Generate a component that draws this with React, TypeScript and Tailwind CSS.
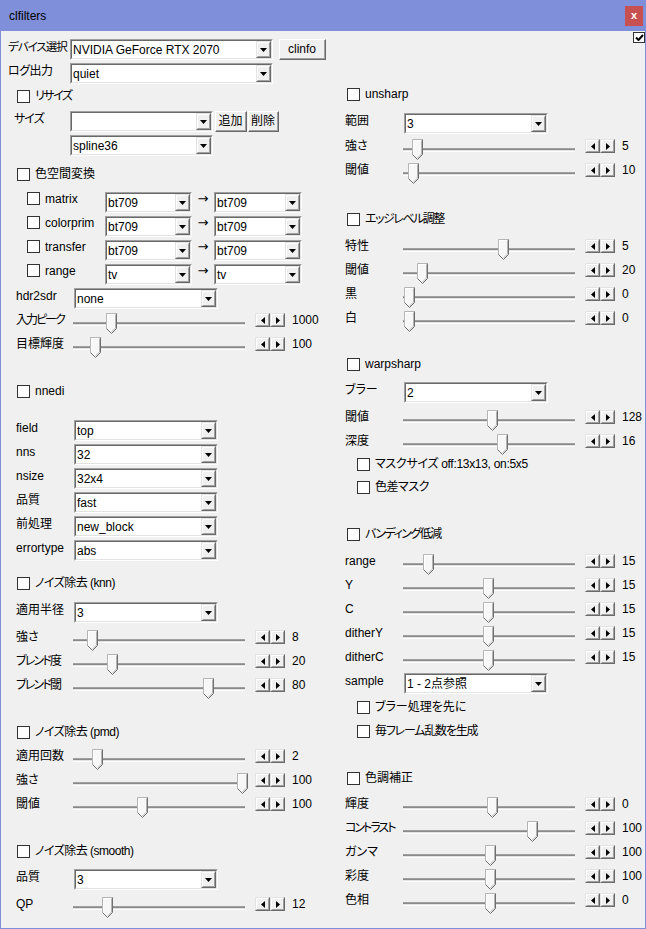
import React from 'react';

type SliderProps = { label: string; pos: number; value: string; cls: string; lw: string; t?: string };

const Check = ({ checked }: { checked?: boolean }) => (
  <div className="flex h-[13px] w-[13px] shrink-0 items-center justify-center border border-[#333333] bg-white">
    {checked && (
      <svg width="9" height="8" viewBox="0 0 9 8">
        <path d="M1 4l2.5 2.5L8 1" stroke="#000" strokeWidth="2" fill="none" />
      </svg>
    )}
  </div>
);

const CheckRow = ({ label, cls, t = '' }: { label: string; cls: string; t?: string }) => (
  <div className={`flex h-[14px] items-center ${cls}`}>
    <Check />
    <span className={`ml-[5px] whitespace-nowrap leading-[14px] ${t}`}>{label}</span>
  </div>
);

const DropBtn = () => (
  <div className="flex w-[15px] shrink-0 border border-t-[#e3e3e3] border-l-[#e3e3e3] border-r-[#696969] border-b-[#696969] bg-[#f0f0f0]">
    <div className="flex flex-1 items-center justify-center border border-t-white border-l-white border-r-[#a0a0a0] border-b-[#a0a0a0]">
      <svg width="7" height="4" viewBox="0 0 7 4">
        <path d="M0 0h7L3.5 4z" fill="#000" />
      </svg>
    </div>
  </div>
);

const Combo = ({ value, cls }: { value: string; cls: string }) => (
  <div className={`flex h-[21px] shrink-0 border border-t-[#a0a0a0] border-l-[#a0a0a0] border-r-white border-b-white ${cls}`}>
    <div className="flex min-w-0 flex-1 border border-t-[#696969] border-l-[#696969] border-r-[#e3e3e3] border-b-[#e3e3e3] bg-white">
      <span className="flex-1 truncate pl-[1px] pt-[2px] leading-[15px]">{value}</span>
      <DropBtn />
    </div>
  </div>
);

const Btn = ({ label, cls }: { label: string; cls: string }) => (
  <div className={`flex h-[21px] shrink-0 border border-t-white border-l-white border-r-[#696969] border-b-[#696969] bg-[#f0f0f0] ${cls}`}>
    <div className="flex flex-1 items-center justify-center border-r border-b border-[#a0a0a0] leading-[15px]">{label}</div>
  </div>
);

const SpinBtn = ({ left }: { left?: boolean }) => (
  <div className="flex h-[14px] w-[15px] border border-t-[#e3e3e3] border-l-[#e3e3e3] border-r-[#696969] border-b-[#696969] bg-[#f0f0f0]">
    <div className="flex flex-1 items-center justify-center border border-t-white border-l-white border-r-[#a0a0a0] border-b-[#a0a0a0]">
      <svg width="4" height="7" viewBox="0 0 4 7">
        <path d={left ? 'M4 0v7L0 3.5z' : 'M0 0v7l4-3.5z'} fill="#000" />
      </svg>
    </div>
  </div>
);

const Thumb = ({ pos }: { pos: number }) => (
  <svg width="11" height="21" viewBox="0 0 11 21" className="absolute top-[1px]" style={{ left: pos - 5 }}>
    <path d="M0.5 0.5H10.5V15.5L5.5 20.5L0.5 15.5Z" fill="#f7f7f7" />
    <path d="M0.5 15.5V0.5H10.5" stroke="#b4b4b4" fill="none" />
    <path d="M1.5 15V1.5H9.5" stroke="#fff" fill="none" />
    <path d="M10.5 0.5V15.5L5.5 20.5L0.5 15.5" stroke="#6f6f6f" fill="none" />
    <path d="M9.5 1.5V15L5.5 19" stroke="#b4b4b4" fill="none" />
  </svg>
);

const Slider = ({ label, pos, value, cls, lw, t = '' }: SliderProps) => (
  <div className={`flex h-[24px] shrink-0 items-start ${cls}`}>
    <span className={`shrink-0 whitespace-nowrap leading-[16px] ${lw} ${t}`}>{label}</span>
    <div className="relative h-[24px] w-[172px] shrink-0 pt-[10px]">
      <div className="h-[4px] border-t border-b border-t-[#a0a0a0] border-b-white bg-[#e3e3e3]">
        <div className="h-[1px] bg-[#8a8a8a]" />
      </div>
      <Thumb pos={pos} />
    </div>
    <div className="ml-[10px] mt-[1px] flex shrink-0">
      <SpinBtn left />
      <SpinBtn />
    </div>
    <span className="ml-[7px] leading-[16px]">{value}</span>
  </div>
);

const ComboRow = ({ label, value, cls, lw }: { label: string; value: string; cls: string; lw: string }) => (
  <div className={`flex h-[21px] shrink-0 items-start ${cls}`}>
    <span className={`shrink-0 whitespace-nowrap leading-[16px] ${lw}`}>{label}</span>
    <Combo value={value} cls="w-[144px]" />
  </div>
);

const CsRow = ({ label, a, b, cls }: { label: string; a: string; b: string; cls: string }) => (
  <div className={`flex h-[21px] shrink-0 items-start pl-[27px] ${cls}`}>
    <div className="flex w-[78px] shrink-0 items-start">
      <Check />
      <span className="ml-[5px] leading-[14px]">{label}</span>
    </div>
    <Combo value={a} cls="w-[87px]" />
    <span className="w-[22px] text-center font-['DejaVu_Sans',sans-serif] text-[13px] leading-[13px]">→</span>
    <Combo value={b} cls="w-[88px]" />
  </div>
);

const L = 'pl-[16px]';
const LW = 'w-[57px]';
const R = 'pl-[15px]';
const RW = 'w-[58px]';

export default function App() {
  return (
    <div className="relative h-[929px] w-[646px] overflow-hidden bg-[#f0f0f0] text-[12px] text-black font-['Liberation_Sans','Noto_Sans_CJK_JP',sans-serif] [font-feature-settings:'palt'] shadow-[inset_1px_0_0_#7f8fd9,inset_-1px_0_0_#7f8fd9,inset_0_-1px_0_#7f8fd9]">
      {/* title bar */}
      <div className="flex h-[31px] items-center bg-[#7f8fd9] pl-[9px]">
        <span className="leading-[16px]">clfilters</span>
        <div className="ml-auto mr-[3px] flex h-[20px] w-[18px] items-center justify-center bg-[#c75050] text-[11px] font-bold leading-none text-white">
          x
        </div>
      </div>

      <div className="absolute left-[633px] top-[32px] flex h-[11px] w-[12px] items-center justify-center border border-[#333333] bg-white">
        <svg width="9" height="7" viewBox="0 0 9 7">
          <path d="M1 3.5l2.5 2.5L8 1" stroke="#000" strokeWidth="2" fill="none" />
        </svg>
      </div>

      <div className="flex">
        {/* left column */}
        <div className="flex w-[330px] shrink-0 flex-col">
          <div className="mt-[8px] flex h-[21px] items-start pl-[8px]">
            <span className="w-[62px] shrink-0 whitespace-nowrap text-[11.5px] leading-[16px] tracking-[-1px]">デバイス選択</span>
            <Combo value="NVIDIA GeForce RTX 2070" cls="w-[203px]" />
            <Btn label="clinfo" cls="ml-[6px] w-[47px]" />
          </div>
          <div className="mt-[3px] flex h-[21px] items-start pl-[8px]">
            <span className="w-[62px] shrink-0 leading-[16px] tracking-[-0.5px]">ログ出力</span>
            <Combo value="quiet" cls="w-[203px]" />
          </div>
          <CheckRow label="リサイズ" cls="mt-[5px] pl-[17px]" t="tracking-[-1.5px]" />
          <div className="mt-[8px] flex h-[21px] items-start pl-[14px]">
            <span className="w-[56px] shrink-0 leading-[16px] tracking-[-1px]">サイズ</span>
            <Combo value="" cls="w-[143px]" />
            <Btn label="追加" cls="ml-[2px] w-[32px]" />
            <Btn label="削除" cls="ml-[1px] w-[31px]" />
          </div>
          <div className="mt-[3px] flex h-[21px] pl-[70px]">
            <Combo value="spline36" cls="w-[143px]" />
          </div>

          <CheckRow label="色空間変換" cls="mt-[11px] pl-[17px]" />
          <CsRow label="matrix" a="bt709" b="bt709" cls="mt-[11px]" />
          <CsRow label="colorprim" a="bt709" b="bt709" cls="mt-[3px]" />
          <CsRow label="transfer" a="bt709" b="bt709" cls="mt-[3px]" />
          <CsRow label="range" a="tv" b="tv" cls="mt-[3px]" />
          <ComboRow label="hdr2sdr" value="none" cls={`mt-[3px] ${L}`} lw="w-[58px]" />
          <Slider label="入力ピーク" pos={38} value="1000" cls={`mt-[3px] ${L}`} lw={LW} t="tracking-[-2px]" />
          <Slider label="目標輝度" pos={22} value="100" cls={L} lw={LW} />

          <CheckRow label="nnedi" cls="mt-[24px] pl-[17px]" />
          <ComboRow label="field" value="top" cls={`mt-[22px] ${L}`} lw="w-[58px]" />
          <ComboRow label="nns" value="32" cls={`mt-[3px] ${L}`} lw="w-[58px]" />
          <ComboRow label="nsize" value="32x4" cls={`mt-[3px] ${L}`} lw="w-[58px]" />
          <ComboRow label="品質" value="fast" cls={`mt-[3px] ${L}`} lw="w-[58px]" />
          <ComboRow label="前処理" value="new_block" cls={`mt-[3px] ${L}`} lw="w-[58px]" />
          <ComboRow label="errortype" value="abs" cls={`mt-[3px] ${L}`} lw="w-[58px]" />

          <CheckRow label="ノイズ除去 (knn)" cls="mt-[15px] pl-[17px]" t="tracking-[-0.5px]" />
          <ComboRow label="適用半径" value="3" cls={`mt-[12px] ${L}`} lw="w-[58px]" />
          <Slider label="強さ" pos={19} value="8" cls={`mt-[6px] ${L}`} lw={LW} />
          <Slider label="ブレンド度" pos={39} value="20" cls={L} lw={LW} t="tracking-[-1.8px]" />
          <Slider label="ブレンド閾" pos={135} value="80" cls={L} lw={LW} t="tracking-[-1.8px]" />

          <CheckRow label="ノイズ除去 (pmd)" cls="mt-[24px] pl-[17px]" t="tracking-[-0.5px]" />
          <Slider label="適用回数" pos={24} value="2" cls={`mt-[9px] ${L}`} lw={LW} />
          <Slider label="強さ" pos={169} value="100" cls={L} lw={LW} />
          <Slider label="閾値" pos={69} value="100" cls={L} lw={LW} />

          <CheckRow label="ノイズ除去 (smooth)" cls="mt-[24px] pl-[17px]" t="tracking-[-0.5px]" />
          <ComboRow label="品質" value="3" cls={`mt-[11px] ${L}`} lw="w-[58px]" />
          <Slider label="QP" pos={34} value="12" cls={`mt-[6px] ${L}`} lw={LW} />
        </div>

        {/* right column */}
        <div className="flex w-[316px] shrink-0 flex-col">
          <CheckRow label="unsharp" cls="mt-[56px] pl-[17px]" />
          <ComboRow label="範囲" value="3" cls={`mt-[12px] ${R}`} lw="w-[59px]" />
          <Slider label="強さ" pos={14} value="5" cls={`mt-[4px] ${R}`} lw={RW} />
          <Slider label="閾値" pos={10} value="10" cls={R} lw={RW} />

          <CheckRow label="エッジレベル調整" cls="mt-[26px] pl-[17px]" t="tracking-[-1.5px]" />
          <Slider label="特性" pos={100} value="5" cls={`mt-[12px] ${R}`} lw={RW} />
          <Slider label="閾値" pos={19} value="20" cls={R} lw={RW} />
          <Slider label="黒" pos={6} value="0" cls={R} lw={RW} />
          <Slider label="白" pos={6} value="0" cls={R} lw={RW} />

          <CheckRow label="warpsharp" cls="mt-[23px] pl-[17px]" />
          <ComboRow label="ブラー" value="2" cls={`mt-[11px] ${R}`} lw="w-[59px]" />
          <Slider label="閾値" pos={89} value="128" cls={`mt-[6px] ${R}`} lw={RW} />
          <Slider label="深度" pos={99} value="16" cls={R} lw={RW} />
          <CheckRow label="マスクサイズ off:13x13, on:5x5" cls="pl-[27px]" t="tracking-[-0.3px]" />
          <CheckRow label="色差マスク" cls="mt-[9px] pl-[27px]" t="tracking-[-0.5px]" />

          <CheckRow label="バンディング低減" cls="mt-[33px] pl-[17px]" t="tracking-[-1.5px]" />
          <Slider label="range" pos={25} value="15" cls={`mt-[12px] ${R}`} lw={RW} />
          <Slider label="Y" pos={85} value="15" cls={R} lw={RW} />
          <Slider label="C" pos={85} value="15" cls={R} lw={RW} />
          <Slider label="ditherY" pos={85} value="15" cls={R} lw={RW} />
          <Slider label="ditherC" pos={85} value="15" cls={R} lw={RW} />
          <ComboRow label="sample" value="1 - 2点参照" cls={R} lw="w-[59px]" />
          <CheckRow label="ブラー処理を先に" cls="mt-[6px] pl-[27px]" />
          <CheckRow label="毎フレーム乱数を生成" cls="mt-[10px] pl-[27px]" t="tracking-[-1.2px]" />

          <CheckRow label="色調補正" cls="mt-[33px] pl-[17px]" />
          <Slider label="輝度" pos={89} value="0" cls={`mt-[11px] ${R}`} lw={RW} />
          <Slider label="コントラスト" pos={129} value="100" cls={R} lw={RW} t="tracking-[-2px]" />
          <Slider label="ガンマ" pos={87} value="100" cls={R} lw={RW} />
          <Slider label="彩度" pos={87} value="100" cls={R} lw={RW} />
          <Slider label="色相" pos={87} value="0" cls={R} lw={RW} />
        </div>
      </div>
    </div>
  );
}
